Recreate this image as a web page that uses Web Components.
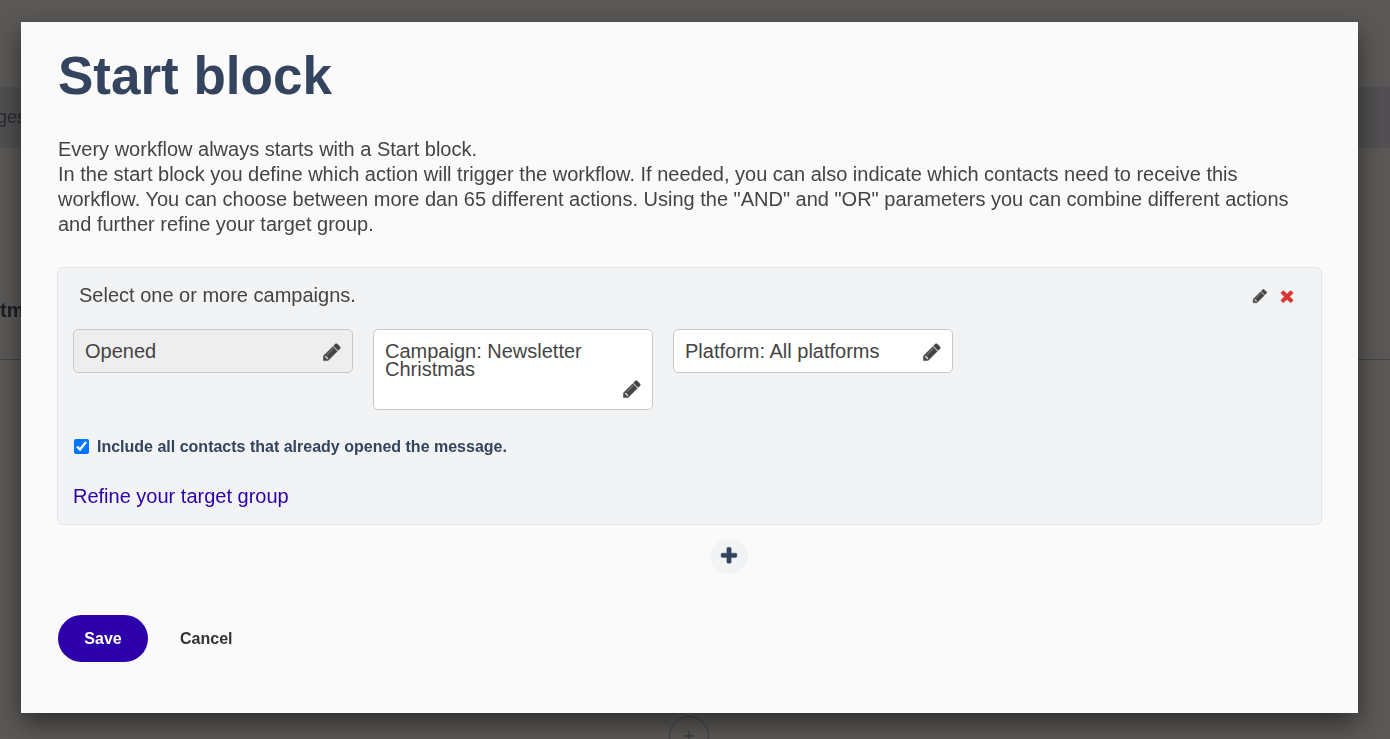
<!DOCTYPE html>
<html lang="en">
<head>
<meta charset="utf-8">
<meta name="viewport" content="width=device-width, initial-scale=1">
<title>Start block</title>
<style>
  body {
    margin: 0;
    min-height: 100vh;
    overflow: hidden;
    background: #5b5957;
    color: #444;
    font-family: "Liberation Sans", Arial, sans-serif;
    font-size: 20px;
    line-height: 25px;
  }
</style>
</head>
<body>
<workflow-page></workflow-page>

<modal-dialog heading="Start block">
  <p slot="intro">Every workflow always starts with a Start block.<br>In the start block you define which action will trigger the workflow. If needed, you can also indicate which contacts need to receive this workflow. You can choose between more dan 65 different actions. Using the "AND" and "OR" parameters you can combine different actions and further refine your target group.</p>

  <condition-panel heading="Select one or more campaigns.">
    <condition-card slot="cards" locked>Opened</condition-card>
    <condition-card slot="cards">Campaign: Newsletter Christmas</condition-card>
    <condition-card slot="cards">Platform: All platforms</condition-card>
    <check-option>Include all contacts that already opened the message.</check-option>
    <refine-link>Refine your target group</refine-link>
  </condition-panel>

  <add-button></add-button>

  <pill-button slot="actions" primary>Save</pill-button>
  <pill-button slot="actions">Cancel</pill-button>
</modal-dialog>

<script>
const ICONS = {
  pencil: 'M491 1536l91-91-235-235-91 91v107h128v128h107zm523-928q0-22-22-22-10 0-17 7l-542 542q-7 7-7 17 0 22 22 22 10 0 17-7l542-542q7-7 7-17zm-54-192l416 416-832 832h-416v-416zm683 96q0 53-37 90l-166 166-416-416 166-165q36-38 90-38 53 0 91 38l235 234q37 39 37 91z',
  times: 'M1490 1322q0 40-28 68l-136 136q-28 28-68 28t-68-28l-294-294-294 294q-28 28-68 28t-68-28l-136-136q-28-28-28-68t28-68l294-294-294-294q-28-28-28-68t28-68l136-136q28-28 68-28t68 28l294 294 294-294q28-28 68-28t68 28l136 136q28 28 28 68t-28 68l-294 294 294 294q28 28 28 68z',
  plus: 'M1600 736v192q0 40-28 68t-68 28h-416v416q0 40-28 68t-68 28h-192q-40 0-68-28t-28-68v-416h-416q-40 0-68-28t-28-68v-192q0-40 28-68t68-28h416v-416q0-40 28-68t68-28h192q40 0 68 28t28 68v416h416q40 0 68 28t28 68z'
};

class UiIcon extends HTMLElement {
  connectedCallback() {
    this.attachShadow({ mode: 'open' });
    this.shadowRoot.innerHTML = `
      <style>
        :host { display: block; width: var(--icon-size, 20px); height: var(--icon-size, 20px); }
        svg { display: block; width: 100%; height: 100%; fill: currentColor; stroke: currentColor; stroke-width: 40; }
      </style>
      <svg viewBox="0 0 1792 1792" aria-hidden="true"><path d="${ICONS[this.getAttribute('name')]}"/></svg>
    `;
  }
}

// Dimmed workflow page that lies behind the dialog
class WorkflowPage extends HTMLElement {
  connectedCallback() {
    this.attachShadow({ mode: 'open' });
    this.shadowRoot.innerHTML = `
      <style>
        :host {
          position: fixed;
          inset: 0;
          display: flex;
          flex-direction: column;
          overflow: hidden;
          color: #2b2b31;
        }
        .top { flex: none; height: 87px; }
        .tabs {
          flex: none;
          height: 61px;
          background: #525052;
          font-size: 18px;
          line-height: 61px;
          text-indent: -3px;
        }
        .title {
          flex: none;
          display: flex;
          align-items: flex-end;
          height: 212px;
          padding-bottom: 36px;
          box-sizing: border-box;
          margin-bottom: 356px;
          border-bottom: 1px solid #454344;
          color: #1c1d24;
          font-weight: bold;
        }
        .node {
          flex: none;
          align-self: center;
          display: flex;
          align-items: center;
          justify-content: center;
          width: 40px;
          height: 40px;
          margin-right: 12px;
          box-sizing: border-box;
          border: 1px solid #434142;
          border-radius: 50%;
        }
        .node svg { width: 10px; height: 10px; stroke: #333; }
      </style>
      <div class="top"></div>
      <div class="tabs">ges</div>
      <div class="title">tm</div>
      <div class="node"><svg viewBox="0 0 10 10"><path d="M5 0v10M0 5h10"/></svg></div>
    `;
  }
}

class ModalDialog extends HTMLElement {
  connectedCallback() {
    this.attachShadow({ mode: 'open' });
    this.shadowRoot.innerHTML = `
      <style>
        :host { display: block; position: relative; padding: 22px 32px 26px 21px; }
        .dialog {
          padding: 24px 36px 51px;
          background: #fafafa;
          box-shadow: 0 10px 25px rgba(0, 0, 0, 0.5);
        }
        h1 {
          margin: 0 0 31px;
          padding-left: 1px;
          color: #34435e;
          font-size: 53px;
          line-height: 60px;
        }
        ::slotted(p) { margin: 0 0 30px; padding-left: 1px; }
        .actions { display: flex; gap: 6px; margin-top: 41px; padding-left: 1px; }
      </style>
      <section class="dialog" role="dialog" aria-labelledby="heading">
        <h1 id="heading">${this.getAttribute('heading')}</h1>
        <slot name="intro"></slot>
        <slot></slot>
        <div class="actions"><slot name="actions"></slot></div>
      </section>
    `;
  }
}

class ConditionPanel extends HTMLElement {
  connectedCallback() {
    this.attachShadow({ mode: 'open' });
    this.shadowRoot.innerHTML = `
      <style>
        :host {
          display: block;
          padding: 15px;
          border: 1px solid #e3e5e8;
          border-radius: 6px;
          background: #f1f3f5;
        }
        header {
          display: flex;
          align-items: center;
          gap: 10px;
          padding: 0 10px 0 6px;
          margin-bottom: 21px;
        }
        h2 { flex: 1; margin: 0; font-size: 20px; font-weight: normal; line-height: 25px; }
        button { padding: 0; border: 0; background: none; color: inherit; cursor: pointer; }
        .edit { --icon-size: 16px; }
        .remove { --icon-size: 18px; color: #d93636; }
        .cards { display: flex; flex-wrap: wrap; align-items: flex-start; gap: 20px; margin-bottom: 24px; }
      </style>
      <header>
        <h2>${this.getAttribute('heading')}</h2>
        <button class="edit" type="button" aria-label="Edit"><ui-icon name="pencil"></ui-icon></button>
        <button class="remove" type="button" aria-label="Remove"><ui-icon name="times"></ui-icon></button>
      </header>
      <div class="cards"><slot name="cards"></slot></div>
      <slot></slot>
    `;
  }
}

class ConditionCard extends HTMLElement {
  connectedCallback() {
    this.attachShadow({ mode: 'open' });
    this.shadowRoot.innerHTML = `
      <style>
        :host {
          display: flex;
          flex-wrap: wrap;
          row-gap: 1px;
          width: 280px;
          padding: 12px 10px 10px 11px;
          box-sizing: border-box;
          border: 1px solid #c8c8c8;
          border-radius: 5px;
          background: #fff;
          line-height: 18px;
        }
        :host([locked]) { background: #eee; }
        button { margin-left: auto; padding: 0; border: 0; background: none; color: inherit; cursor: pointer; }
      </style>
      <span><slot></slot></span>
      <button type="button" aria-label="Edit"><ui-icon name="pencil"></ui-icon></button>
    `;
  }
}

class CheckOption extends HTMLElement {
  connectedCallback() {
    this.attachShadow({ mode: 'open' });
    this.shadowRoot.innerHTML = `
      <style>
        :host { display: block; margin-bottom: 25px; }
        label {
          display: flex;
          align-items: center;
          gap: 8px;
          color: #34435e;
          font-size: 16px;
          font-weight: bold;
        }
        input { width: 15px; height: 15px; margin: 0 0 0 1px; }
      </style>
      <label for="option"><input id="option" type="checkbox" checked><slot></slot></label>
    `;
  }
}

class RefineLink extends HTMLElement {
  connectedCallback() {
    this.attachShadow({ mode: 'open' });
    this.shadowRoot.innerHTML = `
      <style>
        :host { display: block; }
        a { color: #2e00ab; text-decoration: none; }
        a:hover { text-decoration: underline; }
      </style>
      <a href="#refine"><slot></slot></a>
    `;
  }
}

class AddButton extends HTMLElement {
  connectedCallback() {
    this.attachShadow({ mode: 'open' });
    this.shadowRoot.innerHTML = `
      <style>
        :host { display: flex; justify-content: center; margin-top: 14px; padding-left: 78px; }
        button {
          display: flex;
          justify-content: center;
          width: 38px;
          height: 35px;
          padding: 7px 0 0;
          border: 0;
          border-radius: 50%;
          background: #f1f3f5;
          color: #34435e;
          cursor: pointer;
        }
      </style>
      <button type="button" aria-label="Add condition"><ui-icon name="plus"></ui-icon></button>
    `;
  }
}

class PillButton extends HTMLElement {
  connectedCallback() {
    this.attachShadow({ mode: 'open' });
    this.shadowRoot.innerHTML = `
      <style>
        :host { display: block; }
        button {
          min-width: 90px;
          padding: 11px 26px;
          border: 0;
          border-radius: 24px;
          background: none;
          color: #333;
          font: bold 16px/25px "Liberation Sans", Arial, sans-serif;
          cursor: pointer;
        }
        :host([primary]) button { background: #2e00ab; color: #fff; }
      </style>
      <button type="button"><slot></slot></button>
    `;
  }
}

customElements.define('ui-icon', UiIcon);
customElements.define('workflow-page', WorkflowPage);
customElements.define('modal-dialog', ModalDialog);
customElements.define('condition-panel', ConditionPanel);
customElements.define('condition-card', ConditionCard);
customElements.define('check-option', CheckOption);
customElements.define('refine-link', RefineLink);
customElements.define('add-button', AddButton);
customElements.define('pill-button', PillButton);
</script>
</body>
</html>
